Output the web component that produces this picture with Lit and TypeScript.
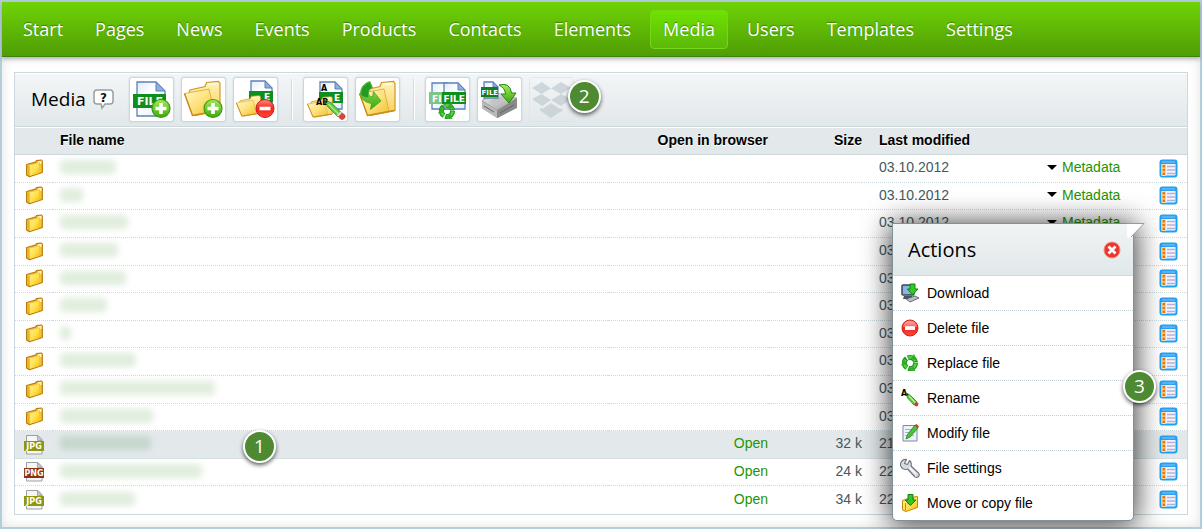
import { LitElement, html, css, svg, nothing } from "lit";
import { customElement, property } from "lit/decorators.js";

/* ---------- shared icon parts ---------- */

const defs = svg`
  <defs>
    <linearGradient id="gold" x1="0" y1="0" x2="1" y2="1">
      <stop offset="0" stop-color="#fff8cc"/><stop offset=".5" stop-color="#fde27e"/><stop offset="1" stop-color="#f2c02c"/>
    </linearGradient>
    <linearGradient id="goldBack" x1="0" y1="0" x2="0" y2="1">
      <stop offset="0" stop-color="#fff3b8"/><stop offset="1" stop-color="#f7d054"/>
    </linearGradient>
    <linearGradient id="face" x1="0" y1="0" x2="1" y2="1">
      <stop offset="0" stop-color="#ffef9a"/><stop offset=".55" stop-color="#ffe14a"/><stop offset="1" stop-color="#f3b51a"/>
    </linearGradient>
    <linearGradient id="paper" x1="0" y1="0" x2="1" y2="1">
      <stop offset="0" stop-color="#dfeafa"/><stop offset=".4" stop-color="#ffffff"/><stop offset="1" stop-color="#e3ecfa"/>
    </linearGradient>
    <linearGradient id="leaf" x1="0" y1="0" x2="0" y2="1">
      <stop offset="0" stop-color="#a6ea5a"/><stop offset="1" stop-color="#3da80f"/>
    </linearGradient>
    <linearGradient id="rouge" x1="0" y1="0" x2="0" y2="1">
      <stop offset="0" stop-color="#ff8b80"/><stop offset=".5" stop-color="#f2231c"/><stop offset="1" stop-color="#ff4a3c"/>
    </linearGradient>
    <linearGradient id="steel" x1="0" y1="0" x2="1" y2="1">
      <stop offset="0" stop-color="#f2f2f2"/><stop offset="1" stop-color="#9a9a9a"/>
    </linearGradient>
  </defs>`;

const sheet = (x: number, y: number, w: number, h: number, f: number) => svg`
  <path d="M${x} ${y}H${x + w - f}L${x + w} ${y + f}V${y + h}H${x}Z" fill="url(#paper)" stroke="#5f80b8" stroke-width="1.3"/>
  <path d="M${x + w - f} ${y}V${y + f}H${x + w}Z" fill="#8fb0df" stroke="#5f80b8"/>`;

const openFolder = svg`
  <path d="M8 16L9 13L24 9.500L25.500 5.500L37.500 4.500L39 6.500V33.500L14 38.500Z" fill="url(#goldBack)" stroke="#cf962a" stroke-width="1.200"/>
  <path d="M27.500 7.500L36.500 6.500" stroke="#fffbe0" stroke-width="1.500"/>
  <path d="M3.500 16.500L28 12L33 34.500L11.500 38.500Z" fill="url(#gold)" stroke="#e3b144" stroke-width="1" stroke-linejoin="round"/>
  <path d="M3.500 16.500L11.500 38.500L38.500 33.500" fill="none" stroke="#c98a1a" stroke-width="1.400"/>`;

const plus = svg`
  <circle cx="32" cy="31.500" r="9" fill="url(#leaf)" stroke="#3a9a12" stroke-width="1.200"/>
  <path d="M32 26V37M26.500 31.500H37.500" stroke="#fff" stroke-width="3.600"/>`;

const recycle = svg`
  <circle cx="0" cy="0" r="5.600" fill="none" stroke="#1f9a1f" stroke-width="5" stroke-dasharray="10.400 1.300"/>
  <circle cx="0" cy="0" r="5.600" fill="none" stroke="#58d043" stroke-width="2.600" stroke-dasharray="8.400 3.300" stroke-dashoffset="-.5"/>
  <path d="M4 -9L7 -2.500L0.500 -4Z M5.500 8L-1.500 7.500L3 2.500Z M-9 2.500L-6 -4L-2.800 1.600Z" fill="#2fb024"/>`;

const bigIcons: Record<string, unknown> = {
  addFile: svg`${sheet(8, 5, 28, 34, 9)}
    <rect x="4" y="17" width="33" height="14" fill="#0d8f1c"/>
    <text x="8" y="28" class="t" font-size="11" fill="#fff">FILE</text>${plus}`,
  addFolder: svg`${openFolder}${plus}`,
  remove: svg`${sheet(18, 4, 21, 26, 7)}
    <rect x="16" y="14" width="24" height="11" fill="#0d8f1c"/>
    <text x="31" y="23" class="t" font-size="9" fill="#fff">E</text>
    <g transform="translate(1 16) scale(.68 .6)">${openFolder}</g>
    <circle cx="32" cy="31.500" r="9" fill="url(#rouge)" stroke="#d01b16"/>
    <rect x="26.500" y="29.700" width="11" height="3.600" fill="#fff"/>`,
  rename: svg`${sheet(17, 5, 22, 27, 7)}
    <rect x="16" y="15" width="24" height="11" fill="#0d8f1c"/>
    <text x="31" y="24" class="t" font-size="9" fill="#fff">E</text>
    <text x="18" y="14" class="t" font-size="8" fill="#000">A</text>
    <g transform="translate(2 17) scale(.7 .6)">${openFolder}</g>
    <text x="13" y="28" class="t" font-size="8" fill="#000">AB</text>
    <path d="M21 23L28 25.500L39 36L35 40L24.500 29.500Z" fill="#5dc83e" stroke="#2d8a22" stroke-width=".7"/>
    <path d="M25.500 27L36 37.500" stroke="#a8ec86" stroke-width="1.600"/>
    <path d="M21 23L25 24.300L22.500 27Z" fill="#333"/>
    <path d="M37.500 34.500L33.700 38.500L35.500 40.300L39.400 36.300Z" fill="#d5dae0"/>
    <path d="M39.400 36L42 38.500Q42.500 42 38.500 42.500L35.500 40Z" fill="#e2432e" stroke="#a92a1c" stroke-width=".7"/>`,
  move: svg`<g transform="translate(1 0)">${openFolder}</g>
    <path d="M15 4.500Q6 7 5.500 16Q6 25 16.500 26.500L15.500 32.500L26 24L18.500 14.500L17.500 20Q13 19.500 13.500 15Q14 12 17.500 10.500Z" fill="url(#leaf)" stroke="#3fa32a" stroke-width=".8"/>
    <path d="M14.500 5Q6.500 8 6 17Q8.500 21 13.500 20Q11.500 13 17 10.500Z" fill="#249a24"/>`,
  replace: svg`${sheet(7, 6, 22, 26, 7)}
    <rect x="4" y="15" width="15" height="12" fill="#7cc684"/>
    <text x="7" y="24.500" class="t" font-size="9" fill="#fff">FI</text>
    ${sheet(19, 6, 21, 26, 7)}
    <rect x="17" y="15" width="24" height="12" fill="#0d8f1c"/>
    <text x="18.500" y="24.500" class="t" font-size="9" fill="#fff">FILE</text>
    <g transform="translate(22 34)">${recycle}</g>`,
  archive: svg`
    <path d="M5 23L22 17L40 21L40 30L20.500 41L5 31Z" fill="#6f6f6f"/>
    <path d="M5 24L20 33V41L5 31.500Z" fill="#b9b9b9"/>
    <path d="M20 33L40 22V31L20 41Z" fill="#8a8a8a"/>
    <path d="M5 23.500L22 16.500L40 21L20 33Z" fill="url(#steel)" stroke="#b0b0b0" stroke-width=".6"/>
    <path d="M12 24L24 20L32 22L20 28Z" fill="#c4c4c4"/>
    <path d="M7 29L17 35M23 36L37 28" stroke="#666" stroke-width="1"/>
    ${sheet(7, 5, 14, 16, 5)}
    <rect x="4" y="10" width="17" height="10" fill="#0d7f1c"/>
    <text x="4.500" y="18" class="t" font-size="7" fill="#fff">FILE</text>
    <path d="M22 8Q33 5 34.500 16H39L32 26L24 17H28.500Q28 11 22 8Z" fill="url(#leaf)" stroke="#218a1c"/>`,
  dropbox: svg`<g fill="#c3cdd2">
    <path d="M3 11L13 5L22 11.500L12.500 17Z M22 11.500L32 5L42 11L32 17Z M3 22L12.500 17L22 23L13 29Z M22 23L32 17L42 22L32 29Z M11 31L13.500 32L22 26L31 32L33.500 31V33.500L22 41L11 33.500Z"/></g>`,
};

const tag = (label: string, color: string) => svg`
  <path d="M2.500 .500H14L18 4.500V19H2.500Z" fill="#f6f6f6" stroke="#9aa0a3"/>
  <path d="M13.500 1V5.500H18Z" fill="#c9cdd0" stroke="#8b9093" stroke-width=".7"/>
  <rect x="0" y="6" width="20" height="10" fill="${color}"/>
  <text x="10" y="14" text-anchor="middle" class="t" font-size="8" fill="#fff">${label}</text>`;

const smallIcons: Record<string, unknown> = {
  folder: svg`<path d="M2.600 5.500L11.500 3.200L12.500 1.700L17.500 1L18.300 2V13.500L5.500 17.600L2.600 16Z" fill="#f6c534" stroke="#b97c0c" stroke-width="1.200" stroke-linejoin="round"/>
    <path d="M5.200 6.800L15 4.200V14.200L5.200 17Z" fill="url(#face)"/>
    <path d="M5 17V7" stroke="#d79a1c" stroke-width=".9"/>
    <path d="M14 3.200L16.800 2.600V5" fill="none" stroke="#fff6c8" stroke-width="1.300"/>`,
  jpg: tag("JPG", "#8f960f"),
  png: tag("PNG", "#8c3412"),
  details: svg`<rect x="1.500" y="1.500" width="16" height="16" rx="2" fill="#f4f4ff" stroke="#18a4f5" stroke-width="2"/>
    <rect x="1" y="1" width="17" height="4" rx="1.500" fill="#2f9df0"/>
    <path d="M3 3H16" stroke="#7ccbff" stroke-width="1"/>
    <rect x="2.500" y="5" width="4.500" height="12" fill="#ffd9a0"/>
    <path d="M4.800 6V17" stroke="#e8780e" stroke-width="2.600" stroke-dasharray="2.400 1.400"/>
    <path d="M8 7.500H16M8 11H16M8 14.500H16" stroke="#b3b0d4" stroke-width="1.400"/>`,
  download: svg`<rect x="2" y="2" width="12" height="10" rx="1" fill="#86b5e6" stroke="#3c4650" stroke-width="1.500"/>
    <path d="M4 13H12L13 16H3Z" fill="#4c545a"/>
    <path d="M6 16L15 13L19 15L10 19Z" fill="#b9bec2" stroke="#4c545a" stroke-width=".8"/>
    <path d="M10 1H15V6H18L12.500 12L7.500 6H10Z" fill="#2fcc22" stroke="#14830f"/>`,
  remove: svg`<circle cx="10" cy="10" r="8" fill="url(#rouge)" stroke="#cf2119"/>
    <path d="M3 9Q4 3 10 3Q16 3 17 9Z" fill="#fff" opacity=".28"/>
    <rect x="5" y="8.300" width="10" height="3.600" rx=".5" fill="#fff"/>`,
  replace: svg`<g transform="translate(10 10)">${recycle}</g>`,
  rename: svg`<text x="1" y="8" class="t" font-size="8" fill="#000">A</text>
    <path d="M6 5L10 7L17 14L14 17L7.500 10Z" fill="#5dc83e" stroke="#2d8a22" stroke-width=".8"/>
    <path d="M6 5L8.500 6.200L7 8Z" fill="#222"/>
    <path d="M9 8L15 14.500" stroke="#b2ef92" stroke-width="1.200"/>
    <path d="M17 14L18.500 15.500Q18.500 18 16 18.500L14 17Z" fill="#e03020"/>`,
  modify: svg`<path d="M3 2.500H17V18H3Z" fill="#edf2fa" stroke="#7b8ba6"/>
    <path d="M5 6.500H11M5 9.500H14M5 12.500H14" stroke="#a4b3cc"/>
    <path d="M15 2L18 5L10 14L6 16L7.500 11.500Z" fill="#4cc238" stroke="#237d1c" stroke-width=".8"/>
    <path d="M15 2L16.500 1L19 3.500L18 5Z" fill="#e03020"/>`,
  settings: svg`<path d="M6.500 1.500A5 5 0 0 0 1 8.500A5 5 0 0 0 7.500 11L14.500 18.500A2 2 0 0 0 18.500 15L11 8A5 5 0 0 0 9.500 2.500L7.500 6.500L4.500 5.500Z" fill="#d9dbe3" stroke="#6d707e" stroke-width="1.100" stroke-linejoin="round"/>
    <path d="M9.500 9.500L16 16" stroke="#fff" stroke-width="1.300"/>`,
  transfer: svg`<path d="M2.500 7.500L8 5.500V11L13 9L13.500 4L17.500 3.500V14.500L6 18.500L2.500 17Z" fill="url(#face)" stroke="#c08912" stroke-linejoin="round"/>
    <path d="M5.500 17.500V10" stroke="#c98c14"/>
    <path d="M8 1.500H13V7H16L10.500 12.500L5 7H8Z" fill="#35c527" stroke="#14830f"/>`,
};

const glyph = css`
  .t { font-family: "DejaVu Sans", "Liberation Sans", sans-serif; font-weight: bold; }
  svg { display: block; }
`;

@customElement("small-icon")
class SmallIcon extends LitElement {
  @property() name = "folder";
  static styles = [glyph, css`
    :host { display: inline-block; width: 20px; height: 20px; vertical-align: middle; }
  `];
  render() {
    return html`<svg width="20" height="20" viewBox="0 0 20 20" aria-hidden="true">${defs}${smallIcons[this.name]}</svg>`;
  }
}

@customElement("tool-button")
class ToolButton extends LitElement {
  @property() icon = "";
  @property() label = "";
  @property({ type: Boolean }) disabled = false;
  static styles = [glyph, css`
    :host { display: block; }
    button {
      display: block; box-sizing: border-box; width: 45px; height: 45px; padding: 0;
      border: 1px solid #cbd7db; border-radius: 3px; background: #fff;
      box-shadow: 0 0 2px #c4d1d6; cursor: pointer;
    }
    button:disabled { border-color: #dde5e8; background: none; box-shadow: none; opacity: .75; cursor: default; }
  `];
  render() {
    return html`<button type="button" aria-label=${this.label} ?disabled=${this.disabled}>
      <svg width="43" height="43" viewBox="1 1 43 43" aria-hidden="true">${defs}${bigIcons[this.icon]}</svg>
    </button>`;
  }
}

@customElement("step-badge")
class StepBadge extends LitElement {
  static styles = css`
    :host {
      position: absolute; z-index: 3; box-sizing: border-box; width: 33px; height: 33px;
      border: 2px solid #fff; border-radius: 50%; background: #4d8a31; color: #fff;
      font: 19px/29px "Open Sans", sans-serif; text-align: center;
      box-shadow: 0 2px 4px rgba(0, 0, 0, .65);
    }
  `;
  render() {
    return html`<slot></slot>`;
  }
}

@customElement("actions-menu")
class ActionsMenu extends LitElement {
  static styles = css`
    :host {
      display: block; box-sizing: border-box; width: 242px; border: 1px solid #7f9297;
      border-radius: 2px 0 5px 5px; background: #fff;
      box-shadow: 0 2px 28px 2px rgba(0, 0, 0, .75);
    }
    header {
      display: flex; align-items: center; justify-content: space-between; height: 51px;
      padding: 0 12px 0 15px; border-bottom: 1px solid #cddadd;
      background: linear-gradient(#f1f4f5, #e1e8ea);
    }
    h2 { margin: 0; font: 20px/28px "Trebuchet MS", "Open Sans", sans-serif; color: #000; }
    .close { display: block; width: 18px; height: 18px; padding: 0; border: 0; background: none; cursor: pointer; }
    .close svg { display: block; }
    .tail { position: absolute; top: -1px; right: -12px; display: block; }
    ul { margin: 0; padding: 0; list-style: none; }
    li + li { border-top: 1px dotted #c3d2d6; }
    li a {
      display: flex; align-items: center; gap: 7px; height: 34px; padding: 0 7px;
      color: #000; font: 14px/20px "Liberation Sans", Arial, sans-serif; text-decoration: none;
    }
  `;
  private entries = [
    ["download", "Download"],
    ["remove", "Delete file"],
    ["replace", "Replace file"],
    ["rename", "Rename"],
    ["modify", "Modify file"],
    ["settings", "File settings"],
    ["transfer", "Move or copy file"],
  ];
  render() {
    return html`
      <header>
        <h2>Actions</h2>
        <button class="close" type="button" aria-label="Close">
          <svg width="18" height="18" viewBox="0 0 18 18" aria-hidden="true">
            <circle cx="9" cy="9" r="8" fill="#e8392c" stroke="#f58d84"/>
            <path d="M5.500 5.500L12.500 12.500M12.500 5.500L5.500 12.500" stroke="#fff" stroke-width="2.800"/>
          </svg>
        </button>
      </header>
      <svg class="tail" width="18" height="15" viewBox="0 0 18 15" aria-hidden="true">
        <path d="M0 .5H17L4 14.500H0Z" fill="#fff"/>
        <path d="M0 .5H17L4 14" fill="none" stroke="#8fa0a5"/>
      </svg>
      <ul>
        ${this.entries.map(([icon, label]) => html`
          <li><a href="#${icon}"><small-icon name=${icon}></small-icon>${label}</a></li>`)}
      </ul>
      <slot></slot>
    `;
  }
}

interface Entry {
  icon: string;
  width: number;
  date: string;
  size?: string;
  selected?: boolean;
}

const entries: Entry[] = [
  { icon: "folder", width: 56, date: "03.10.2012" },
  { icon: "folder", width: 23, date: "03.10.2012" },
  { icon: "folder", width: 68, date: "03.10.2012" },
  { icon: "folder", width: 58, date: "03.10.2012" },
  { icon: "folder", width: 66, date: "03.10.2012" },
  { icon: "folder", width: 47, date: "03.10.2012" },
  { icon: "folder", width: 11, date: "03.10.2012" },
  { icon: "folder", width: 76, date: "03.10.2012" },
  { icon: "folder", width: 155, date: "03.10.2012" },
  { icon: "folder", width: 93, date: "03.10.2012" },
  { icon: "jpg", width: 91, date: "21.10.2012", size: "32 k", selected: true },
  { icon: "png", width: 142, date: "22.10.2012", size: "24 k" },
  { icon: "jpg", width: 75, date: "22.10.2012", size: "34 k" },
];

@customElement("app-root")
class AppRoot extends LitElement {
  static styles = css`
    :host {
      display: block; position: relative; box-sizing: border-box; min-height: 100vh;
      border: 2px solid #b4cddb; background: #fff;
      font: 14px/18px "Liberation Sans", Arial, sans-serif; color: #3f5a60;
    }
    a { color: #1f9500; text-decoration: none; }
    nav {
      position: relative; display: flex; align-items: center; gap: 6px; box-sizing: border-box;
      height: 55px; padding: 0 8px; border-bottom: 1px solid #3a8407;
      background: linear-gradient(#6fd305, #4f9d05);
      box-shadow: 0 2px 4px rgba(90, 80, 110, .4);
    }
    nav a {
      box-sizing: border-box; height: 39px; padding: 0 12px; border: 1px solid transparent; border-radius: 4px;
      color: #fff; font: 18px/37px "Trebuchet MS", "Open Sans", sans-serif;
      text-shadow: 0 -1px 1px rgba(30, 90, 0, .6);
    }
    nav a.current { border-color: #74d815; background: linear-gradient(#6fe200, #5cb80a); }
    main { padding: 15px 12px 12px; box-shadow: inset 0 0 12px rgba(0, 0, 0, .12); }
    .panel { border: 1px solid #cbd8dc; }
    .toolbar {
      display: flex; align-items: center; gap: 7px; box-sizing: border-box; height: 54px; padding: 0 16px 2px;
      border-top: 1px solid #fff; border-bottom: 1px solid #cbd8dc;
      background: linear-gradient(#f3f6f7, #e1e7ea);
    }
    h1 { margin: 0; font: 19px/28px "Trebuchet MS", "Open Sans", sans-serif; color: #000; }
    .help { width: 21px; height: 22px; margin-right: 8px; padding: 0; border: 0; background: none; cursor: pointer; }
    .help svg { display: block; }
    .rule { width: 1px; height: 41px; margin: 0 3px 0 6px; background: #d2dce0; border-right: 1px solid #fff; }
    .anchor { position: relative; }
    .on-tool { left: 39px; top: 3px; }
    .on-row { left: 191px; top: -1px; }
    .on-menu { right: -23px; top: 146px; }
    table { width: 100%; border-spacing: 0; table-layout: fixed; }
    th {
      height: 28px; box-sizing: border-box; padding: 0 0 2px; border-top: 1px solid #fff; border-bottom: 1px solid #cbd8dc;
      background: #e3e9eb; color: #000; text-align: left; text-shadow: 0 1px 0 #fff;
    }
    td { height: 28px; box-sizing: border-box; padding: 0 0 3px; border-bottom: 1px dotted #c9dade; }
    tr:nth-child(5n + 2) td, tr:nth-child(5n + 5) td { height: 27px; }
    tbody tr:last-child td { border-bottom: 0; }
    tr.selected td { background: #e3e9eb; border-bottom: 1px solid #d3e1e4; }
    .c-icon { width: 37px; }
    .c-open { width: 160px; }
    .c-size { width: 94px; }
    .c-date { width: 171px; }
    .c-meta { width: 117px; }
    .c-more { width: 37px; }
    td.icon, td.more { padding: 0; text-align: center; line-height: 0; }
    .name { padding-left: 8px; position: relative; }
    .end { text-align: right; }
    th.date, td.date { padding-left: 17px; }
    .meta a { display: flex; align-items: center; gap: 5px; padding-left: 14px; }
    .arrow { width: 0; height: 0; border: 5px solid transparent; border-top-color: #000; border-bottom: 0; }
    .more button { display: inline-block; width: 20px; height: 20px; padding: 0; border: 0; background: none; cursor: pointer; }
    .veil { display: block; height: 14px; border-radius: 4px; background: #d3e6cf; filter: blur(3px); opacity: .7; }
    .selected .veil { background: #b9cfc0; }
    actions-menu { position: absolute; top: 221px; right: 66px; z-index: 2; }
  `;

  private pages = ["Start", "Pages", "News", "Events", "Products", "Contacts", "Elements", "Media", "Users", "Templates", "Settings"];

  render() {
    return html`
      <nav aria-label="Main">
        ${this.pages.map((p) => html`<a href="#${p.toLowerCase()}" class=${p === "Media" ? "current" : ""}>${p}</a>`)}
      </nav>
      <main>
        <section class="panel">
          <div class="toolbar">
            <h1>Media</h1>
            <button class="help" type="button" aria-label="Help">
              <svg width="21" height="22" viewBox="0 0 21 22" aria-hidden="true">
                <path d="M4 2H17Q20 2 20 5V13Q20 16 17 16H12L9 20L8 16H4Q1 16 1 13V5Q1 2 4 2Z" fill="#fff" stroke="#98a0a4" stroke-width="1.500"/>
                <text x="10.500" y="13.500" text-anchor="middle" font-family="DejaVu Sans" font-weight="bold" font-size="12" fill="#111">?</text>
              </svg>
            </button>
            <tool-button icon="addFile" label="Add file"></tool-button>
            <tool-button icon="addFolder" label="Add folder"></tool-button>
            <tool-button icon="remove" label="Delete"></tool-button>
            <span class="rule"></span>
            <tool-button icon="rename" label="Rename"></tool-button>
            <tool-button icon="move" label="Move"></tool-button>
            <span class="rule"></span>
            <tool-button icon="replace" label="Replace"></tool-button>
            <tool-button icon="archive" label="Archive"></tool-button>
            <div class="anchor">
              <tool-button icon="dropbox" label="Dropbox" disabled></tool-button>
              <step-badge class="on-tool">2</step-badge>
            </div>
          </div>
          <table>
            <colgroup>
              <col class="c-icon"><col><col class="c-open"><col class="c-size">
              <col class="c-date"><col class="c-meta"><col class="c-more">
            </colgroup>
            <thead>
              <tr>
                <th></th>
                <th class="name">File name</th>
                <th class="end">Open in browser</th>
                <th class="end">Size</th>
                <th class="date">Last modified</th>
                <th></th>
                <th></th>
              </tr>
            </thead>
            <tbody>
              ${entries.map((e) => html`
                <tr class=${e.selected ? "selected" : ""}>
                  <td class="icon"><small-icon name=${e.icon}></small-icon></td>
                  <td class="name">
                    <span class="veil" style="width:${e.width}px"></span>
                    ${e.selected ? html`<step-badge class="on-row">1</step-badge>` : nothing}
                  </td>
                  <td class="end">${e.size ? html`<a href="#open">Open</a>` : nothing}</td>
                  <td class="end">${e.size ?? nothing}</td>
                  <td class="date">${e.date}</td>
                  <td class="meta"><a href="#metadata"><span class="arrow"></span>Metadata</a></td>
                  <td class="more"><button type="button" aria-label="Actions"><small-icon name="details"></small-icon></button></td>
                </tr>`)}
            </tbody>
          </table>
        </section>
      </main>
      <actions-menu><step-badge class="on-menu">3</step-badge></actions-menu>
    `;
  }
}
